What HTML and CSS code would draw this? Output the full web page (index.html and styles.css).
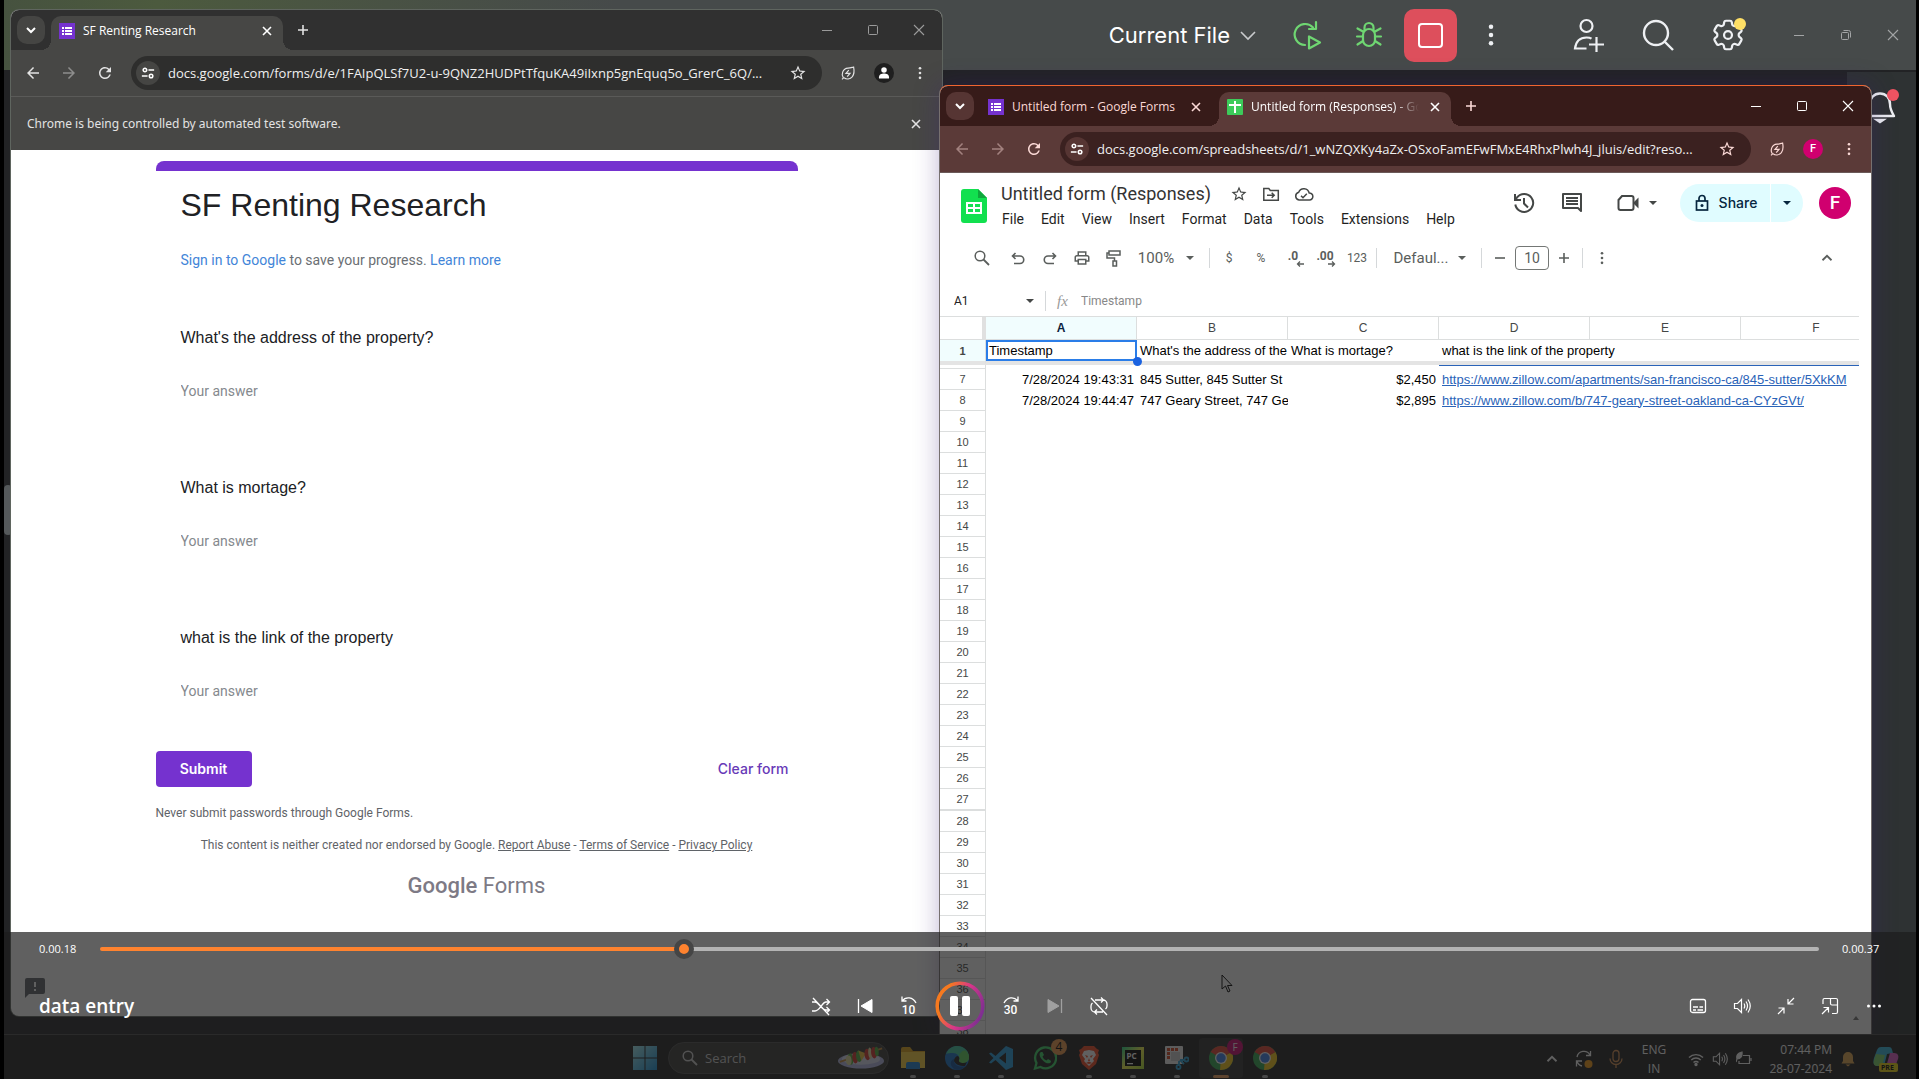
FILE: index.html
```html
<!DOCTYPE html>
<html lang="en">
<head>
<meta charset="utf-8">
<meta name="viewport" content="width=device-width, initial-scale=1">
<title>data entry</title>
<link rel="stylesheet" href="styles.css">
</head>
<body>
<svg class="sprite" aria-hidden="true">
  <symbol id="down" viewBox="0 0 16 16"><path d="M4 6l4 4 4-4" fill="none" stroke="currentColor" stroke-width="2"/></symbol>
  <symbol id="caret" viewBox="0 0 16 16"><path d="M4 6h8l-4 4z" fill="currentColor"/></symbol>
  <symbol id="close" viewBox="0 0 16 16"><path d="M4 4l8 8M12 4l-8 8" fill="none" stroke="currentColor" stroke-width="1.6"/></symbol>
  <symbol id="plus" viewBox="0 0 16 16"><path d="M8 3v10M3 8h10" fill="none" stroke="currentColor" stroke-width="1.6"/></symbol>
  <symbol id="minus" viewBox="0 0 16 16"><path d="M3 8h10" fill="none" stroke="currentColor" stroke-width="1.6"/></symbol>
  <symbol id="wmin" viewBox="0 0 16 16"><path d="M3 8.5h10" stroke="currentColor"/></symbol>
  <symbol id="wmax" viewBox="0 0 16 16"><rect x="3.5" y="3.5" width="9" height="9" rx="1" fill="none" stroke="currentColor"/></symbol>
  <symbol id="wclose" viewBox="0 0 16 16"><path d="M3 3l10 10M13 3L3 13" stroke="currentColor" stroke-width="1.1"/></symbol>
  <symbol id="back" viewBox="0 0 24 24"><path d="M20 11H7.83l5.59-5.59L12 4l-8 8 8 8 1.41-1.41L7.83 13H20v-2z" fill="currentColor"/></symbol>
  <symbol id="fwd" viewBox="0 0 24 24"><path d="M12 4l-1.41 1.41L16.17 11H4v2h12.17l-5.58 5.59L12 20l8-8z" fill="currentColor"/></symbol>
  <symbol id="reload" viewBox="0 0 24 24"><path d="M17.65 6.35A7.958 7.958 0 0 0 12 4c-4.42 0-7.99 3.58-7.99 8s3.57 8 7.99 8c3.73 0 6.84-2.55 7.73-6h-2.08A5.99 5.99 0 0 1 12 18c-3.31 0-6-2.69-6-6s2.69-6 6-6c1.66 0 3.14.69 4.22 1.78L13 11h7V4l-2.35 2.35z" fill="currentColor"/></symbol>
  <symbol id="tune" viewBox="0 0 16 16"><g fill="none" stroke="currentColor" stroke-width="1.8"><circle cx="4.5" cy="4.5" r="2"/><path d="M8.5 4.5H15M1 11.500h6.500"/><circle cx="11.500" cy="11.500" r="2"/></g></symbol>
  <symbol id="star" viewBox="0 0 24 24"><path d="M22 9.24l-7.190-.62L12 2 9.190 8.630 2 9.240l5.460 4.730L5.820 21 12 17.270 18.180 21l-1.630-7.030L22 9.240zM12 15.400l-3.760 2.270 1-4.280-3.320-2.880 4.380-.38L12 6.100l1.710 4.040 4.380.38-3.320 2.880 1 4.280L12 15.400z" fill="currentColor"/></symbol>
  <symbol id="leaf" viewBox="0 0 20 20"><g fill="none" stroke="currentColor" stroke-width="1.500"><path d="M4 15.500C1.500 12 3 4.500 10 4c3 0 4.500-.8 7-1.500 1 5 .8 9-1.500 12-3 3.500-7.500 3.500-10.500 1.500M2.500 18L5 15.500"/><path d="M11 6.500L7.500 10.500h5L9 14.500"/></g></symbol>
  <symbol id="dots" viewBox="0 0 16 16"><g fill="currentColor"><circle cx="8" cy="2.500" r="1.500"/><circle cx="8" cy="8" r="1.500"/><circle cx="8" cy="13.500" r="1.500"/></g></symbol>
  <symbol id="person" viewBox="0 0 24 24"><circle cx="12" cy="12" r="12" fill="#1f1f1f"/><circle cx="12" cy="8.500" r="3.300" fill="#fff"/><path d="M6 18.500v-1.500c0-3 3-4.300 6-4.300s6 1.300 6 4.300v1.500z" fill="#fff"/></symbol>
  <symbol id="formsfav" viewBox="0 0 16 16"><path fill="#7532cf" d="M0 0h16v16H0z"/><path fill="#fff" d="M3 4h2v2H3zM6 4h7v2H6zM3 7h2v2H3zM6 7h7v2H6zM3 10h2v2H3zM6 10h7v2H6z"/></symbol>
  <symbol id="sheetfav" viewBox="0 0 16 16"><rect width="16" height="16" rx="1" fill="#3ccb5a"/><path fill="#fff" d="M2 5h5V2h2v3h5v2H9v7H7V7H2z"/></symbol>
  <symbol id="sheets" viewBox="0 0 26 34"><path fill="#12e04f" d="M3 0h14l9 9v22a3 3 0 0 1-3 3H3a3 3 0 0 1-3-3V3a3 3 0 0 1 3-3z"/><path fill="#0fa83c" d="M17 0l9 9h-9z"/><path fill="#fff" fill-rule="evenodd" d="M5 13h16v12H5zM7 15v3h5v-3zM14 15v3h5v-3zM7 20v3h5v-3zM14 20v3h5v-3z"/></symbol>
  <symbol id="folder" viewBox="0 0 18 18"><path d="M1.800 3.500h5l1.500 2h8v9.700H1.800zM5 10.300h7M9.700 7.800l2.500 2.500-2.500 2.500" fill="none" stroke="currentColor" stroke-width="1.500"/></symbol>
  <symbol id="cloud" viewBox="0 0 20 18"><path d="M5 15a4 4 0 0 1-.3-7.800A5.500 5.500 0 0 1 15.200 8 3.500 3.500 0 0 1 15.500 15zM7 10.700l2 2 3.800-4" fill="none" stroke="currentColor" stroke-width="1.500"/></symbol>
  <symbol id="history" viewBox="0 0 24 24"><g fill="none" stroke="currentColor" stroke-width="2"><path d="M3.300 13.500A9 9 0 1 0 5 6.500M3 3v6h6"/><path d="M3.500 8.500L5.500 6"/><path d="M12 7v5.500l4 4"/></g></symbol>
  <symbol id="comment" viewBox="0 0 24 24"><g fill="none" stroke="currentColor" stroke-width="2"><path d="M21 20V3H3v14h15z" stroke-linejoin="round"/><path d="M6 7h12M6 10h12M6 13h12"/></g></symbol>
  <symbol id="video" viewBox="0 0 24 24"><path d="M6 5h9.500a2 2 0 0 1 2 2v10a2 2 0 0 1-2 2h-11a2 2 0 0 1-2-2V9z" fill="none" stroke="currentColor" stroke-width="2"/><path d="M17 12l5.500-5.500v11z" fill="currentColor"/></symbol>
  <symbol id="lock" viewBox="0 0 18 18"><g fill="none" stroke="currentColor" stroke-width="1.700"><rect x="3.500" y="7" width="11" height="9"/><path d="M6 7V4.500a3 3 0 0 1 6 0V7"/></g><circle cx="9" cy="11.500" r="1.500" fill="currentColor"/></symbol>
  <symbol id="find" viewBox="0 0 18 18"><path d="M10.500 10.500L16 16" stroke="currentColor" stroke-width="1.800"/><circle cx="7" cy="7" r="4.800" fill="none" stroke="currentColor" stroke-width="1.500"/></symbol>
  <symbol id="undo" viewBox="0 0 18 18"><path d="M6.500 4L3.500 7l3 3M3.500 7H11a3.500 3.500 0 0 1 0 7.500H5" fill="none" stroke="currentColor" stroke-width="1.600"/></symbol>
  <symbol id="redo" viewBox="0 0 18 18"><path d="M11.500 4l3 3-3 3M14.500 7H7a3.500 3.500 0 0 0 0 7.500h6" fill="none" stroke="currentColor" stroke-width="1.600"/></symbol>
  <symbol id="print" viewBox="0 0 24 24"><path d="M19 8h-1V3H6v5H5c-1.660 0-3 1.340-3 3v6h4v4h12v-4h4v-6c0-1.660-1.340-3-3-3zM8 5h8v3H8V5zm8 12v2H8v-4h8v2zm2-2v-2H6v2H4v-4c0-.55.45-1 1-1h14c.55 0 1 .45 1 1v4h-2z" fill="currentColor"/></symbol>
  <symbol id="paint" viewBox="0 0 18 18"><path d="M4 2h11v4H4zM4 4H2v5h7.500v3M8 12h3.500v5H8z" fill="none" stroke="currentColor" stroke-width="1.500"/></symbol>
  <symbol id="arrl" viewBox="0 0 8 6"><path d="M8 3H1.500M4 .5L1.500 3 4 5.500" fill="none" stroke="currentColor" stroke-width="1.300"/></symbol>
  <symbol id="arrr" viewBox="0 0 8 6"><path d="M0 3h6.500M4 .5L6.500 3 4 5.500" fill="none" stroke="currentColor" stroke-width="1.300"/></symbol>
  <symbol id="up" viewBox="0 0 16 16"><path d="M4 10l4-4 4 4" fill="none" stroke="currentColor" stroke-width="1.600"/></symbol>
  <symbol id="vol" viewBox="0 0 18 18"><path d="M1.500 6.500v5h3l4 4v-13l-4 4zM11 6.500q1.500 2.500 0 5M13 4.500q3 4.500 0 9M15 2.500q4.500 6.500 0 13" fill="none" stroke="currentColor" stroke-width="1.200"/></symbol>
  <symbol id="chrome" viewBox="0 0 24 24"><circle cx="12" cy="12" r="12" fill="#2fa84f"/><path d="M12 12L1.600 6A12 12 0 0 1 22.400 6z" fill="#e8402f"/><path d="M12 12l10.400-6A12 12 0 0 1 12 24l-1-.1z" fill="#fbc816"/><path d="M12 6h10.400L12 12z" fill="#e8402f"/><circle cx="12" cy="12" r="6" fill="#fff"/><circle cx="12" cy="12" r="4.700" fill="#3b7fee"/></symbol>
</svg>

<div class="desktop">
  <header class="ide-bar">
    <button class="ide-run">Current File <svg class="i20" viewBox="0 0 20 20"><path d="M3 7l7 7 7-7" fill="none" stroke="#c9cbcd" stroke-width="1.600"/></svg></button>
    <button class="ide-btn green" aria-label="Rerun"><svg class="i32" viewBox="0 0 32 32" fill="none" stroke="currentColor" stroke-width="2.200" stroke-linecap="round" stroke-linejoin="round"><path d="M14 26A10.500 10.500 0 1 1 22 8.500M25 3v7h-7"/><path d="M18 17.500v12l11-6z"/></svg></button>
    <button class="ide-btn green" aria-label="Debug"><svg class="i32" viewBox="0 0 32 32" fill="none" stroke="currentColor" stroke-width="2.200" stroke-linecap="round"><rect x="10" y="10" width="12" height="17" rx="6"/><path d="M11.500 11V8.500a4.500 4.500 0 0 1 9 0V11M4 17.500h6M22 17.500h6M4.500 9.500L10 12.500M27.500 9.500L22 12.500M4.500 25.500L10 22M27.500 25.500L22 22"/></svg></button>
    <button class="ide-stop" aria-label="Stop"><span></span></button>
    <button class="ide-btn more" aria-label="More actions"><svg class="i24"><use href="#dots"/></svg></button>
    <button class="ide-btn user" aria-label="Code with me"><svg class="i32" viewBox="0 0 32 32" fill="none" stroke="currentColor" stroke-width="2.200"><circle cx="14.500" cy="7" r="6"/><path d="M14.500 29.500H3c1-8 5-11 11.500-11 2.500 0 4 .5 5 1.200M24.500 18v15M17 25.500h15"/></svg></button>
    <button class="ide-btn" aria-label="Search everywhere"><svg class="i32" viewBox="0 0 32 32" fill="none" stroke="currentColor" stroke-width="2.400"><circle cx="14" cy="14" r="12"/><path d="M22.500 22.500L31 31"/></svg></button>
    <button class="ide-btn" aria-label="Settings"><svg class="i38" viewBox="0 0 24 24" fill="none" stroke="currentColor" stroke-width="1.400"><path d="M9.594 3.94c.09-.542.56-.94 1.11-.94h2.593c.55 0 1.020.398 1.110.94l.213 1.281c.063.374.313.686.645.87.074.04.147.083.22.127.325.196.72.257 1.075.124l1.217-.456a1.125 1.125 0 0 1 1.370.49l1.296 2.247a1.125 1.125 0 0 1-.26 1.431l-1.003.827c-.293.241-.438.613-.43.992a7.723 7.723 0 0 1 0 .255c-.008.378.137.75.43.991l1.004.827c.424.35.534.955.26 1.430l-1.298 2.247a1.125 1.125 0 0 1-1.369.491l-1.217-.456c-.355-.133-.75-.072-1.076.124a6.470 6.470 0 0 1-.22.128c-.331.183-.581.495-.644.869l-.213 1.281c-.09.543-.56.94-1.110.94h-2.594c-.55 0-1.019-.398-1.110-.94l-.213-1.281c-.062-.374-.312-.686-.644-.87a6.520 6.520 0 0 1-.22-.127c-.325-.196-.72-.257-1.076-.124l-1.217.456a1.125 1.125 0 0 1-1.369-.49l-1.297-2.247a1.125 1.125 0 0 1 .26-1.431l1.004-.827c.292-.24.437-.613.43-.991a6.932 6.932 0 0 1 0-.255c.007-.38-.138-.751-.43-.992l-1.004-.827a1.125 1.125 0 0 1-.26-1.430l1.297-2.247a1.125 1.125 0 0 1 1.370-.491l1.216.456c.356.133.751.072 1.076-.124.072-.044.146-.086.22-.128.332-.183.582-.495.644-.869l.214-1.280Z"/><circle cx="12" cy="12" r="2.500"/></svg><i class="badge yellow"></i></button>
    <div class="ide-win">
      <button aria-label="Minimize"><svg class="i16"><use href="#wmin"/></svg></button>
      <button aria-label="Restore"><svg class="i16" viewBox="0 0 16 16" fill="none" stroke="currentColor"><rect x="3.500" y="5.500" width="7" height="7" rx="1"/><path d="M5.500 3.500h5a2 2 0 0 1 2 2v5"/></svg></button>
      <button aria-label="Close"><svg class="i16"><use href="#wclose"/></svg></button>
    </div>
  </header>
  <aside class="ide-side">
    <button aria-label="Notifications"><svg class="i36" viewBox="0 0 36 36" fill="none" stroke="currentColor" stroke-width="2.400"><path d="M4 28h28c-3-5-4-7-4-12 0-6-4-10.500-10-10.500S8 10 8 16c0 5-1 7-4 12z" stroke-linejoin="round"/><path d="M15 32h6l-3 2z" fill="currentColor"/></svg><i class="badge red"></i></button>
  </aside>
  <div class="ide-handle"></div>

  <section class="window form-window">
    <div class="strip">
      <button class="tab-search" aria-label="Search tabs"><svg class="i16"><use href="#down"/></svg></button>
      <div class="tab active"><svg class="i16"><use href="#formsfav"/></svg><span>SF Renting Research</span><button aria-label="Close tab"><svg class="i16"><use href="#close"/></svg></button></div>
      <button class="new-tab" aria-label="New tab"><svg class="i16"><use href="#plus"/></svg></button>
      <div class="controls"><button aria-label="Minimize"><svg class="i16"><use href="#wmin"/></svg></button><button aria-label="Maximize"><svg class="i16"><use href="#wmax"/></svg></button><button aria-label="Close"><svg class="i16"><use href="#wclose"/></svg></button></div>
    </div>
    <div class="bar">
      <button aria-label="Back"><svg class="i18"><use href="#back"/></svg></button>
      <button class="off" aria-label="Forward"><svg class="i18"><use href="#fwd"/></svg></button>
      <button aria-label="Reload"><svg class="i18"><use href="#reload"/></svg></button>
      <div class="omnibox"><span class="site"><svg class="i14"><use href="#tune"/></svg></span><input type="text" aria-label="Address" value="docs.google.com/forms/d/e/1FAIpQLSf7U2-u-9QNZ2HUDPtTfquKA49iIxnp5gnEquq5o_GrerC_6Q/..."><button aria-label="Bookmark"><svg class="i18"><use href="#star"/></svg></button></div>
      <button aria-label="Energy saver"><svg class="i16"><use href="#leaf"/></svg></button>
      <button aria-label="Profile"><svg class="i20"><use href="#person"/></svg></button>
      <button aria-label="Menu"><svg class="i14"><use href="#dots"/></svg></button>
    </div>
    <div class="infobar"><span>Chrome is being controlled by automated test software.</span><button aria-label="Dismiss"><svg class="i16"><use href="#close"/></svg></button></div>
    <form class="form">
      <div class="form-top"></div>
      <div class="form-body">
        <h1>SF Renting Research</h1>
        <p class="signin"><a href="#">Sign in to Google</a> to save your progress. <a href="#">Learn more</a></p>
        <div class="questions">
          <div class="q"><label for="q1">What's the address of the property?</label><input id="q1" type="text" placeholder="Your answer"></div>
          <div class="q"><label for="q2">What is mortage?</label><input id="q2" type="text" placeholder="Your answer"></div>
          <div class="q"><label for="q3">what is the link of the property</label><input id="q3" type="text" placeholder="Your answer"></div>
        </div>
      </div>
      <div class="actions"><button class="submit" type="button">Submit</button><button class="clear" type="button">Clear form</button></div>
      <p class="never">Never submit passwords through Google Forms.</p>
      <p class="legal">This content is neither created nor endorsed by Google. <a href="#">Report Abuse</a> - <a href="#">Terms of Service</a> - <a href="#">Privacy Policy</a></p>
      <p class="brand"><b>Google</b> Forms</p>
    </form>
    <button class="report" aria-label="Report a problem"><svg class="i24" viewBox="0 0 24 24"><path d="M4 2h16a2 2 0 0 1 2 2v12a2 2 0 0 1-2 2H6l-4 4V4a2 2 0 0 1 2-2z" fill="#5f6368"/><path d="M11 6h2v5h-2zM11 13h2v2h-2z" fill="#fff"/></svg></button>
  </section>

  <section class="window sheet-window">
    <div class="strip">
      <button class="tab-search" aria-label="Search tabs"><svg class="i16"><use href="#down"/></svg></button>
      <div class="tab"><svg class="i16"><use href="#formsfav"/></svg><span>Untitled form - Google Forms</span><button aria-label="Close tab"><svg class="i16"><use href="#close"/></svg></button></div>
      <div class="tab active"><svg class="i16"><use href="#sheetfav"/></svg><span class="fade">Untitled form (Responses) - Goo</span><button aria-label="Close tab"><svg class="i16"><use href="#close"/></svg></button></div>
      <button class="new-tab" aria-label="New tab"><svg class="i16"><use href="#plus"/></svg></button>
      <div class="controls"><button aria-label="Minimize"><svg class="i16"><use href="#wmin"/></svg></button><button aria-label="Maximize"><svg class="i16"><use href="#wmax"/></svg></button><button aria-label="Close"><svg class="i16"><use href="#wclose"/></svg></button></div>
    </div>
    <div class="bar">
      <button class="off" aria-label="Back"><svg class="i18"><use href="#back"/></svg></button>
      <button class="off" aria-label="Forward"><svg class="i18"><use href="#fwd"/></svg></button>
      <button aria-label="Reload"><svg class="i18"><use href="#reload"/></svg></button>
      <div class="omnibox"><span class="site"><svg class="i14"><use href="#tune"/></svg></span><input type="text" aria-label="Address" value="docs.google.com/spreadsheets/d/1_wNZQXKy4aZx-OSxoFamEFwFMxE4RhxPlwh4J_jluis/edit?reso..."><button aria-label="Bookmark"><svg class="i18"><use href="#star"/></svg></button></div>
      <button aria-label="Energy saver"><svg class="i16"><use href="#leaf"/></svg></button>
      <button aria-label="Profile"><span class="avatar small">F</span></button>
      <button aria-label="Menu"><svg class="i14"><use href="#dots"/></svg></button>
    </div>
    <div class="sheet">
      <header class="doc-head">
        <svg class="logo"><use href="#sheets"/></svg>
        <div class="doc-name">
          <div class="doc-title"><span>Untitled form (Responses)</span><svg class="i18"><use href="#star"/></svg><svg class="i18"><use href="#folder"/></svg><svg class="i20"><use href="#cloud"/></svg></div>
          <nav class="menu"><button>File</button><button>Edit</button><button>View</button><button>Insert</button><button>Format</button><button>Data</button><button>Tools</button><button>Extensions</button><button>Help</button></nav>
        </div>
        <div class="doc-right">
          <button aria-label="Version history"><svg class="i24"><use href="#history"/></svg></button>
          <button aria-label="Comments"><svg class="i24"><use href="#comment"/></svg></button>
          <button class="meet" aria-label="Meet"><svg class="i24"><use href="#video"/></svg><svg class="i16"><use href="#caret"/></svg></button>
          <div class="share"><button><svg class="i18"><use href="#lock"/></svg>Share</button><button aria-label="Share options"><svg class="i16"><use href="#caret"/></svg></button></div>
          <span class="avatar">F</span>
        </div>
      </header>
      <div class="tools">
        <button class="menus" aria-label="Search menus"><svg class="i18"><use href="#find"/></svg></button>
        <button aria-label="Undo"><svg class="i18"><use href="#undo"/></svg></button>
        <button aria-label="Redo"><svg class="i18"><use href="#redo"/></svg></button>
        <button aria-label="Print"><svg class="i18"><use href="#print"/></svg></button>
        <button aria-label="Paint format"><svg class="i18"><use href="#paint"/></svg></button>
        <button class="drop">100% <svg class="i16"><use href="#caret"/></svg></button>
        <i class="rule"></i>
        <button class="sm">$</button><button class="sm">%</button>
        <button class="dec" aria-label="Decrease decimals">.0<svg><use href="#arrl"/></svg></button>
        <button class="dec" aria-label="Increase decimals">.00<svg><use href="#arrr"/></svg></button>
        <button class="sm">123</button>
        <i class="rule"></i>
        <button class="drop font">Defaul... <svg class="i16"><use href="#caret"/></svg></button>
        <i class="rule"></i>
        <button class="tight" aria-label="Smaller"><svg class="i16"><use href="#minus"/></svg></button>
        <input class="size" type="text" aria-label="Font size" value="10">
        <button class="tight" aria-label="Larger"><svg class="i16"><use href="#plus"/></svg></button>
        <i class="rule"></i>
        <button aria-label="More"><svg class="i14"><use href="#dots"/></svg></button>
        <button class="hide" aria-label="Hide menus"><svg class="i18"><use href="#up"/></svg></button>
      </div>
      <div class="formula">
        <input class="cellname" type="text" aria-label="Name box" value="A1"><svg class="i16"><use href="#caret"/></svg><i class="rule"></i><i class="fx">fx</i><input class="cellval" type="text" aria-label="Formula" value="Timestamp">
      </div>
      <div class="grid">
        <table>
          <colgroup><col class="n"><col><col><col><col><col><col></colgroup>
          <thead><tr><th class="corner"></th><th class="sel">A</th><th>B</th><th>C</th><th>D</th><th>E</th><th>F</th></tr></thead>
          <tbody>
            <tr class="frozen"><th>1</th><td class="cur">Timestamp<i></i></td><td>What's the address of the</td><td>What is mortage?</td><td colspan="3">what is the link of the property</td></tr>
            <tr class="part"><th></th><td></td><td></td><td></td><td class="ul" colspan="3"></td></tr>
            <tr><th>7</th><td class="r">7/28/2024 19:43:31</td><td>845 Sutter, 845 Sutter St</td><td class="r">$2,450</td><td colspan="3"><a href="#">https://www.zillow.com/apartments/san-francisco-ca/845-sutter/5XkKM</a></td></tr>
            <tr><th>8</th><td class="r">7/28/2024 19:44:47</td><td>747 Geary Street, 747 Ge</td><td class="r">$2,895</td><td colspan="3"><a href="#">https://www.zillow.com/b/747-geary-street-oakland-ca-CYzGVt/</a></td></tr>
            <tr><th>9</th></tr><tr><th>10</th></tr><tr><th>11</th></tr><tr><th>12</th></tr><tr><th>13</th></tr><tr><th>14</th></tr><tr><th>15</th></tr><tr><th>16</th></tr><tr><th>17</th></tr><tr><th>18</th></tr><tr><th>19</th></tr><tr><th>20</th></tr><tr><th>21</th></tr><tr><th>22</th></tr><tr><th>23</th></tr><tr><th>24</th></tr><tr><th>25</th></tr><tr><th>26</th></tr><tr class="thick"><th>27</th></tr><tr><th>28</th></tr><tr><th>29</th></tr><tr><th>30</th></tr><tr><th>31</th></tr><tr><th>32</th></tr><tr><th>33</th></tr><tr><th>34</th></tr><tr><th>35</th></tr><tr><th>36</th></tr><tr><th>37</th></tr><tr><th>38</th></tr>
          </tbody>
        </table>
        <svg class="scroll-up" viewBox="0 0 6 4"><path d="M0 4l3-4 3 4z" fill="#777"/></svg>
      </div>
    </div>
  </section>

  <footer class="taskbar">
    <div class="apps">
      <button class="app start" aria-label="Start"><svg class="i24" viewBox="0 0 24 24"><defs><linearGradient id="wg" x1="0" y1="0" x2="1" y2="1"><stop offset="0" stop-color="#a5f0f5"/><stop offset="1" stop-color="#1590d8"/></linearGradient></defs><path fill="url(#wg)" d="M0 0h11.500v11.500H0zM12.500 0H24v11.500H12.500zM0 12.500h11.500V24H0zM12.500 12.500H24V24H12.500z"/></svg></button>
      <div class="search"><svg class="i18"><use href="#find"/></svg><input type="text" aria-label="Search" placeholder="Search"><svg class="food" viewBox="0 0 50 24"><ellipse cx="25" cy="15" rx="24" ry="8" fill="#b4b9e6"/><ellipse cx="25" cy="13" rx="20" ry="6" fill="#dcdff5"/><path d="M3 16L47 2" stroke="#c68a3a" stroke-width="2"/><g transform="rotate(-6 25 12)"><ellipse cx="14" cy="12" rx="3" ry="6" fill="#4fae3a"/><ellipse cx="12" cy="13" rx="3" ry="5" fill="#e8e2a0"/><ellipse cx="19" cy="11" rx="3" ry="6" fill="#d8322a"/><ellipse cx="23" cy="10" rx="3" ry="6" fill="#4fae3a"/><path d="M23 4l8 4-6 7z" fill="#f0c23a"/><ellipse cx="32" cy="9" rx="3" ry="6" fill="#d8322a"/><ellipse cx="35" cy="8" rx="2" ry="6" fill="#e8e2a0"/><ellipse cx="39" cy="8" rx="3" ry="6" fill="#d8322a"/><ellipse cx="42" cy="7" rx="2" ry="5" fill="#4fae3a"/></g></svg></div>
      <button class="app run" aria-label="File Explorer"><svg class="i24" viewBox="0 0 24 24"><path d="M0 3a2 2 0 0 1 2-2h7l3 4h12v17H0z" fill="#e0a517"/><path d="M0 6h24v16H0z" fill="#ffd23f"/><path d="M5 23v-5a2 2 0 0 1 2-2h10a2 2 0 0 1 2 2v5z" fill="#1d80d3"/></svg></button>
      <button class="app run" aria-label="Edge"><svg class="i24" viewBox="0 0 24 24"><circle cx="12" cy="12" r="12" fill="#1673c8"/><path d="M1 8C4 1 9 0 12 0c8 0 12 6 12 11 0 4-3 6-6 6s-5-1-4-3c1-4-2-7-6-7-3 0-5 0-7 1z" fill="#3fc9a0"/><path d="M24 11c0 4-3 6-6 6s-5-1-4-3c1-1 1-2 0-4 1-3 5-8 8-4 1 1 2 3 2 5z" fill="#5fd65a"/><path d="M9 13c-1 6 5 9 11 7-2 3-5 4-8 4-6-1-9-9-3-11z" fill="#0c4f9c"/><path d="M14 14c1-2 0-4-2-4-2 1-3 3-3 5 1 3 5 5 11 5l2-4c-3 2-9 1-8-2z" fill="#212121"/></svg></button>
      <button class="app run" aria-label="Visual Studio Code"><svg class="i24" viewBox="0 0 24 24"><path d="M17 0l7 3v18l-7 3L6.500 14 2 17.500 0 16.500 4.500 12 0 7.500l2-1L6.500 10zM17 6.500L10 12l7 5.500z" fill="#249fe0" fill-rule="evenodd"/></svg></button>
      <button class="app" aria-label="WhatsApp"><svg class="i24" viewBox="0 0 24 24"><path d="M2 22.500l1.500-5.500A10.500 10.500 0 1 1 7.500 21z" fill="none" stroke="#3ad566" stroke-width="2.300"/><path d="M8 6c-2 1-2 4 1 7.500S15 18 17 17c1.500-1 1-2 .5-2.500L15 13l-1.500 1.500c-2-.8-3.300-2-4-4L11 9 9.500 6z" fill="#3ad566"/></svg><b class="count">4</b></button>
      <button class="app run" aria-label="Brave"><svg class="i24" viewBox="0 0 24 24"><path d="M7 0h10l3 3 2 1-1 3 1 2-3 9-7 6-7-6L2 9l1-2-1-3 2-1z" fill="#f4461f"/><path d="M7 5l5-1 5 1 2 4-3 4 1 2-5 5-5-5 1-2-3-4z" fill="#fff"/><path d="M8 9l3 1-1 2zM16 9l-3 1 1 2zM12 12l1 3h-2zM9 17l3-1.500 3 1.500-3 1z" fill="#f4461f"/></svg></button>
      <button class="app run" aria-label="PyCharm"><svg class="i24" viewBox="0 0 24 24"><defs><linearGradient id="pg" x1="0" y1="0" x2="1" y2="1"><stop offset="0" stop-color="#21d789"/><stop offset=".5" stop-color="#fcf84a"/><stop offset="1" stop-color="#a8e030"/></linearGradient></defs><path fill="url(#pg)" d="M1 1h22v22H1z"/><path d="M4 4h16v16H4z"/><path d="M6 17h6v1.300H6z" fill="#fff"/><text x="5.500" y="13" font-size="8" font-weight="700" fill="#fff" font-family="Noto Sans, sans-serif">PC</text></svg></button>
      <button class="app run" aria-label="Snipping Tool"><svg class="i24" viewBox="0 0 24 24"><rect width="18" height="18" rx="1" fill="#f2f2f2"/><path d="M2 2h3v3H2zM6 2h3v3H6zM10 2h3v3h-3zM2 6h3v3H2zM2 10h3v3H2z" fill="#d8431f"/><path d="M6 6h9v9H6z" fill="#d0d0d0"/><g fill="none" stroke="#27a3dc" stroke-width="1.800"><circle cx="13.500" cy="21" r="2"/><circle cx="21.500" cy="13.500" r="2"/><path d="M14 19v-4M20 14h-5M15 14l4 4"/></g></svg></button>
      <button class="app run focus" aria-label="Chrome, F"><svg class="i24"><use href="#chrome"/></svg><b class="count pink">F</b></button>
      <button class="app run" aria-label="Chrome"><svg class="i24"><use href="#chrome"/></svg></button>
    </div>
    <div class="tray">
      <button aria-label="Hidden icons"><svg class="i18"><use href="#up"/></svg></button>
      <button aria-label="Update"><svg class="i20" viewBox="0 0 20 20" fill="none" stroke="currentColor" stroke-width="1.300"><path d="M3 8a7 7 0 0 1 13-2M16.500 2v4.500H12M8 17a7 7 0 0 1-5-5M2.500 17.500v-5.500H8"/><circle cx="14.500" cy="15" r="4" fill="#f89a12" stroke="none"/></svg></button>
      <button class="mic" aria-label="Microphone"><svg class="i20" viewBox="0 0 20 20" fill="none" stroke="#d98f4f" stroke-width="1.300"><rect x="7" y="1.500" width="6" height="11" rx="3"/><path d="M4 9.500a6 6 0 0 0 12 0M10 15.500V19"/></svg></button>
      <span class="lang">ENG<br>IN</span>
      <svg class="i16" viewBox="0 0 16 16" fill="none" stroke="currentColor" stroke-width="1.400"><path d="M1 6.500a10 10 0 0 1 14 0M3.300 9a6.700 6.700 0 0 1 9.400 0M5.500 11.500a3.500 3.500 0 0 1 5 0"/><circle cx="8" cy="13.500" r="1" fill="currentColor"/></svg>
      <svg class="i16"><use href="#vol"/></svg>
      <svg class="i16" viewBox="0 0 16 16" fill="none" stroke="currentColor" stroke-width="1.200"><path d="M7 4.500h6.500v8H3V10M15 7v3"/><path d="M1 8c-1-4 1-6 5-7 .5 4-1 7-5 7l-1 3" fill="currentColor"/></svg>
      <time class="clock">07:44 PM<br>28-07-2024</time>
      <svg class="i16" viewBox="0 0 16 16" fill="#e5a84e"><path d="M1.500 12.500L3 10V6a5 5 0 0 1 10 0v4l1.500 2.500zM5.500 13.500h5l-2.500 2z"/></svg>
      <svg class="pre" viewBox="0 0 26 28"><path d="M8 2h8c3 0 3 3 4 6l-6 1-3 12H5c-5 0-5-4-4-8L4 5c1-2 2-3 4-3z" fill="#33b7e0"/><path d="M3 9l-2 6c-1 4 0 6 4 6h4l3-11z" fill="#7ed56a"/><path d="M17 8h4c4 0 5 3 4 6l-3 8h-9z" fill="#e05ac8"/><rect x="6" y="18" width="19" height="9" rx="2" fill="#f5d90a"/><text x="8" y="25" font-size="7" font-weight="700" font-family="Noto Sans, sans-serif">PRE</text></svg>
    </div>
  </footer>

  <svg class="pointer" viewBox="0 0 12 19"><path d="M1 1v14l3.500-3 2.500 6 2-1-2.500-5.500H11z" fill="#fff" stroke="#000"/></svg>

  <section class="player">
    <div class="seek"><span>0.00.18</span><input type="range" min="0" max="1000" value="338" aria-label="Position"><span>0.00.37</span></div>
    <div class="transport">
      <h2>data entry</h2>
      <div class="keys">
        <button aria-label="Shuffle off"><svg class="i20" viewBox="0 0 20 20" fill="none" stroke="currentColor" stroke-width="1.300"><path d="M1 15h3C9 15 11 6 15 6h3M15.500 3L18.500 6l-3 3M15.500 11l3 3-3 3M1 6h3c4 0 6 8 11 8h3M2 2l16 17"/></svg></button>
        <button aria-label="Previous"><svg class="i16" viewBox="0 0 16 16"><path d="M1.500 1v14" stroke="currentColor" stroke-width="1.300"/><path d="M15 1.500v13L4 8z" fill="currentColor" stroke="currentColor" stroke-linejoin="round"/></svg></button>
        <button class="skip" aria-label="Back 10 seconds"><svg viewBox="0 0 18 8" fill="none" stroke="currentColor" stroke-width="1.300"><path d="M2 .5V5h4.500M2 5c4-5 11-4 14 2"/></svg>10</button>
        <button class="pause" aria-label="Pause"><svg viewBox="0 0 50 50"><defs><linearGradient id="ring" x1="0" y1=".3" x2="1" y2=".7"><stop offset=".15" stop-color="#f5791f"/><stop offset=".55" stop-color="#d8358a"/><stop offset="1" stop-color="#7a2f92"/></linearGradient></defs><circle cx="25" cy="25" r="22.800" fill="none" stroke="url(#ring)" stroke-width="3.600"/><rect x="15" y="15" width="8" height="20" rx="2" fill="#fff"/><rect x="27" y="15" width="8" height="20" rx="2" fill="#fff"/></svg></button>
        <button class="skip" aria-label="Forward 30 seconds"><svg viewBox="0 0 18 8" fill="none" stroke="currentColor" stroke-width="1.300"><path d="M16 .5V5h-4.500M16 5C12 0 5 1 2 7"/></svg>30</button>
        <button class="dim" aria-label="Next"><svg class="i16" viewBox="0 0 16 16"><path d="M14.500 1v14" stroke="currentColor" stroke-width="1.300"/><path d="M1 1.500v13L12 8z" fill="currentColor" stroke="currentColor" stroke-linejoin="round"/></svg></button>
        <button aria-label="Repeat off"><svg class="i20" viewBox="0 0 20 20" fill="none" stroke="currentColor" stroke-width="1.300"><path d="M6 4h8a4 4 0 0 1 4 4v2a4 4 0 0 1-1.500 3M12 1.500L14.500 4 12 6.500M14 16H6a4 4 0 0 1-4-4v-2a4 4 0 0 1 1.500-3M8 13.500L5.500 16 8 18.500M2 2l16 17"/></svg></button>
      </div>
      <div class="extras">
        <button aria-label="Subtitles"><svg class="i18" viewBox="0 0 18 18" fill="none" stroke="currentColor" stroke-width="1.300"><rect x="1.500" y="2.500" width="15" height="13" rx="2"/><path d="M4 10h5M10.500 10H14M4 13h3M8.500 13H14"/></svg></button>
        <button aria-label="Volume"><svg class="i18"><use href="#vol"/></svg></button>
        <button aria-label="Exit full screen"><svg class="i18" viewBox="0 0 18 18" fill="none" stroke="currentColor" stroke-width="1.200"><path d="M17 1l-6 6M11 2v5h5.500M1 17l6-6M1.500 11H7v5.500"/></svg></button>
        <button aria-label="Mini player"><svg class="i18" viewBox="0 0 18 18" fill="none" stroke="currentColor" stroke-width="1.200"><path d="M2 7V3a1.500 1.500 0 0 1 1.500-1.500H15A1.500 1.500 0 0 1 16.500 3v12a1.500 1.500 0 0 1-1.500 1.500h-4M9.500 1.500v5a1.500 1.500 0 0 0 1.500 1.500h5.500M1 17l6-6M2.500 10.500h5v5"/></svg></button>
        <button aria-label="More"><svg class="i16" viewBox="0 0 16 16" fill="currentColor"><circle cx="2.500" cy="8" r="1.500"/><circle cx="8" cy="8" r="1.500"/><circle cx="13.500" cy="8" r="1.500"/></svg></button>
      </div>
    </div>
  </section>
</div>
</body>
</html>
```
FILE: styles.css
```css
* { box-sizing: border-box; }
html, body { height: 100%; }
body { margin: 0; background: #000; font: 12px/16px "Open Sans", "Noto Sans", sans-serif; }
h1, h2, p { margin: 0; font-weight: 400; }
button { border: 0; padding: 0; background: none; color: inherit; font: inherit; display: flex; align-items: center; justify-content: center; flex: none; }
input { border: 0; padding: 0; background: none; color: inherit; font: inherit; min-width: 0; outline: 0; }
svg { flex: none; display: block; }
.sprite { position: absolute; width: 0; height: 0; }
.i14 { width: 14px; height: 14px; }
.i16 { width: 16px; height: 16px; }
.i18 { width: 18px; height: 18px; }
.i20 { width: 20px; height: 20px; }
.i24 { width: 24px; height: 24px; }
.i32 { width: 32px; height: 32px; overflow: visible; }
.i36 { width: 36px; height: 36px; }
.i38 { width: 38px; height: 38px; }

.desktop { position: relative; height: 100%; min-height: 600px; overflow: hidden; background: #222325; border-left: 4px solid #000; border-right: 3px solid #000; }

/* IDE behind the browser windows */
.ide-bar { height: 70px; display: flex; align-items: center; justify-content: flex-end; color: #eef0f3; background: linear-gradient(90deg, #46523f 0, #4c5a3e 8%, #464a4a 32%); }
.ide-run { font: 22px/28px Inter, sans-serif; gap: 8px; color: #fff; margin-right: 18px; }
.ide-btn { position: relative; width: 62px; height: 54px; }
.ide-btn:nth-child(3) { margin-right: 4px; }
.green { color: #6fd672; }
.ide-stop { width: 53px; height: 53px; border-radius: 10px; background: #dd4f5c; }
.ide-stop span { width: 25px; height: 25px; border: 2px solid #fff; border-radius: 4px; }
.ide-btn.more { width: 68px; }
.ide-btn.user { margin-left: 28px; }
.ide-btn.user, .ide-btn.user ~ .ide-btn { width: 70px; }
.badge { position: absolute; width: 12px; height: 12px; border-radius: 50%; }
.badge.yellow { background: #ffe066; left: 41px; top: 10px; }
.ide-win { display: flex; color: #a3a5a6; margin-left: 12px; }
.ide-win button { width: 47px; height: 47px; }
.ide-side { position: absolute; top: 72px; right: 0; bottom: 44px; width: 69px; background: #2e3233; color: #eef0f3; }
.ide-side button { position: absolute; top: 16px; left: 15px; }
.badge.red { background: #f05462; left: 25px; top: 1px; }
.ide-handle { position: absolute; left: 0; top: 485px; width: 8px; height: 50px; background: #55595b; border-radius: 4px; }

/* Browser windows */
.window { position: absolute; display: flex; flex-direction: column; overflow: hidden; background: #fff; border-radius: 8px; }
.form-window { left: 7px; top: 10px; bottom: 63px; right: calc(50% + 18px); --strip: #303030; --tool: #474745; --field: #2e2e2d; --fg: #e3e3e3; --chip: #454543; box-shadow: 0 0 0 1px #5f655f; }
.sheet-window { left: calc(50% - 20px); right: 45px; top: 86px; bottom: 45px; border-radius: 8px 8px 0 0; --strip: #371b19; --tool: #5b3a38; --field: #3b2120; --fg: #fbd9d6; --chip: #563533; box-shadow: 0 -1px 0 #f0652f, 0 0 0 1px #77706f, 0 0 26px rgba(60, 30, 120, .35); }
.strip { height: 40px; flex: none; display: flex; padding-left: 6px; background: var(--strip); color: var(--fg); }
.tab-search { width: 28px; height: 28px; margin: 6px 6px 0 0; border-radius: 10px; background: var(--chip); color: #fff; }
.tab { position: relative; width: 232px; height: 34px; margin-top: 6px; padding: 0 8px 4px; display: flex; align-items: center; gap: 8px; border-radius: 10px 10px 0 0; }
.tab + .tab { margin-left: 7px; }
.tab.active { background: var(--tool); color: #fff; }
.tab.active::before, .tab.active::after { content: ""; position: absolute; bottom: 0; width: 10px; height: 10px; }
.tab.active::before { left: -10px; background: radial-gradient(circle at 0 0, transparent 10px, var(--tool) 10px); }
.tab.active::after { right: -10px; background: radial-gradient(circle at 100% 0, transparent 10px, var(--tool) 10px); }
.tab span { flex: 1; min-width: 0; overflow: hidden; white-space: nowrap; font-size: 12px; line-height: 20px; }
.tab .fade { -webkit-mask-image: linear-gradient(90deg, #000 85%, transparent); mask-image: linear-gradient(90deg, #000 85%, transparent); }
.new-tab { width: 28px; height: 28px; margin: 6px 0 0 6px; }
.controls { display: flex; margin-left: auto; color: #fff; }
.form-window .controls { color: #9a9a9a; }
.controls button { width: 46px; height: 40px; }
.bar { height: 46px; flex: none; display: flex; align-items: center; gap: 8px; padding: 0 8px; background: var(--tool); color: var(--fg); }
.bar button { width: 28px; height: 28px; }
.bar .off { opacity: .45; }
.omnibox { flex: 1; min-width: 0; height: 34px; margin: 0 4px; padding: 0 10px 0 5px; border-radius: 17px; display: flex; align-items: center; background: var(--field); }
.omnibox input { flex: 1; margin-left: 8px; font-size: 13px; line-height: 20px; color: #f0f0f0; }
.site { width: 24px; height: 24px; border-radius: 50%; background: var(--chip); display: grid; place-items: center; color: #fff; }
.infobar { height: 54px; flex: none; display: flex; align-items: center; justify-content: space-between; padding: 0 16px; background: var(--tool); border-top: 1px solid #5a5a58; color: var(--fg); font-family: "Noto Sans", sans-serif; }
.infobar button { width: 20px; height: 20px; }
.avatar { width: 32px; height: 32px; border-radius: 50%; background: #d0006f; color: #fff; display: grid; place-items: center; font: 500 19px/32px Roboto, sans-serif; }
.avatar.small { width: 20px; height: 20px; font-size: 11px; line-height: 20px; }

/* Form page */
.form { flex: 1; width: 100%; max-width: 642px; margin: 0 auto; padding-top: 11px; color: #202124; font-family: Roboto, sans-serif; }
.form-top { height: 10px; border-radius: 8px 8px 0 0; background: #7532cf; }
.form-body { padding: 14px 25px 0; }
.form h1 { font: 32px/40px "Liberation Sans", sans-serif; }
.signin { margin: 25px 0 56px; font-size: 14px; line-height: 20px; color: #6b6f74; }
.signin a { color: #4285d8; text-decoration: none; }
.questions { display: grid; gap: 73px; }
.q { display: grid; gap: 29px; }
.q label { font: 16px/24px "Liberation Sans", sans-serif; }
.q input { height: 24px; font-size: 14px; }
.q input::placeholder { color: #85898e; opacity: 1; }
.actions { display: flex; justify-content: space-between; margin-top: 48px; font: 500 14px/20px Inter, sans-serif; }
.submit { width: 96px; height: 36px; border-radius: 4px; background: #7532cf; color: #fff; font-weight: 600; }
.clear { color: #673ab7; padding: 0 9px; }
.never { margin: 18px 0 16px; color: #5f6368; }
.legal { text-align: center; color: #5f6368; }
.legal a { color: inherit; }
.brand { margin-top: 17px; text-align: center; font-size: 22px; line-height: 32px; color: #7d7a85; }
.brand b { font-weight: 500; }
.report { position: absolute; left: 12px; bottom: 16px; }

/* Spreadsheet page */
.sheet { flex: 1; min-height: 0; display: flex; flex-direction: column; border-top: 1px solid #6b5a59; color: #444746; font-family: Roboto, sans-serif; }
.doc-head { display: flex; padding: 9px 20px 0 21px; }
.logo { width: 26px; height: 34px; margin-top: 7px; }
.doc-name { margin-left: 7px; }
.doc-title { display: flex; align-items: center; gap: 14px; height: 24px; padding-left: 7px; }
.doc-title span { font-size: 18px; line-height: 24px; margin-right: 5px; color: #333; }
.menu { display: flex; gap: 1px; margin-top: 3px; font-size: 14px; line-height: 20px; color: #1f1f1f; }
.menu button { padding: 0 8px; }
.doc-right { margin-left: auto; display: flex; align-items: center; height: 42px; }
.doc-right > button { width: 48px; height: 32px; }
.doc-right .meet { width: 68px; gap: 5px; margin: 0 8px; }
.share { display: flex; height: 38px; border-radius: 19px; overflow: hidden; background: #e0fcff; color: #06263f; font: 500 14px/20px Inter, sans-serif; }
.share button { width: 90px; gap: 8px; }
.share button + button { width: 33px; border-left: 1px solid #fff; }
.doc-right .avatar { margin-left: 16px; }
.tools { display: flex; align-items: center; height: 32px; margin-top: 13px; padding: 0 28px 0 26px; font-size: 14px; color: #5a5e5c; }
.tools button { width: 32px; height: 28px; }
.tools .menus { margin-right: 4px; }
.tools .drop { width: 76px; gap: 8px; font-size: 15px; }
.tools .font { width: 92px; margin-left: 6px; gap: 6px; }
.tools .sm { font-size: 12px; }
.tools .dec { position: relative; font-weight: 700; font-size: 12px; align-items: flex-start; padding-top: 4px; }
.dec svg { position: absolute; width: 8px; height: 6px; right: 5px; bottom: 5px; }
.tools .tight { width: 30px; }
.rule { width: 1px; height: 20px; background: #d5d8da; margin: 0 3px; flex: none; }
.size { width: 34px; height: 24px; border: 1px solid #747775; border-radius: 4px; text-align: center; }
.tools .hide { margin-left: auto; }
.formula { display: flex; align-items: center; height: 30px; margin-top: 12px; padding-left: 14px; font-size: 12px; flex: none; }
.cellname { width: 68px; color: #222; }
.formula .rule { margin: 0 11px 0 7px; }
.formula .fx { width: 16px; margin-right: 8px; font: italic 15px/16px "Liberation Serif", serif; color: #999; }
.cellval { flex: 1; color: #888; }
.grid { position: relative; flex: 1; min-height: 0; overflow: hidden; margin-right: 12px; border-top: 1px solid #dcdede; color: #000; font-family: "Liberation Sans", sans-serif; font-size: 13px; }
.grid table { width: 952px; table-layout: fixed; border-collapse: separate; border-spacing: 0; }
.grid col { width: 151px; }
.grid .n { width: 46px; }
.grid th, .grid td { height: 21px; padding: 0 3px; line-height: 20px; overflow: hidden; white-space: nowrap; text-align: left; }
.grid tbody th, .grid thead th { font-size: 11px; font-weight: 400; text-align: center; color: #444746; border-right: 1px solid #dcdede; border-bottom: 1px solid #dcdede; }
.grid thead th { height: 23px; font-size: 12px; }
.grid thead .corner { border-right: 4px solid #e0e0e0; }
.grid thead .sel { background: #f1fdfe; font-weight: 700; color: #0b2340; }
.grid .frozen th { font-weight: 700; background: #f1fdfe; }
.grid .frozen > * { height: 25px; border-bottom: 4px solid #e4e4e4; }
.grid .frozen .cur { position: relative; overflow: visible; box-shadow: inset 0 0 0 2px #2a7de8; }
.cur i { position: absolute; right: -5px; bottom: -5px; width: 9px; height: 9px; border-radius: 50%; background: #1a62e0; }
.grid .part > * { height: 4px; line-height: 1px; }
.part .ul { border-top: 1px solid #2a63b8; }
.grid .r { text-align: right; }
.grid td a { color: #2a63b8; }
.grid .thick th { height: 22px; border-bottom-width: 2px; }
.scroll-up { position: absolute; right: 0; bottom: 14px; width: 6px; height: 4px; }

/* Windows taskbar */
.taskbar { position: absolute; left: 0; right: 0; bottom: 0; height: 45px; display: flex; align-items: center; justify-content: center; padding-right: 11px; background: #212121; border-top: 1px solid #4a4a4a; color: #fff; }
.apps { display: flex; align-items: center; padding-top: 2px; }
.app { position: relative; width: 44px; height: 40px; }
.app.start { width: 46px; }
.app.run::after { content: ""; position: absolute; bottom: 0; left: 19px; width: 6px; height: 3px; border-radius: 2px; background: #aaa; }
.app.focus { background: #303030; border-radius: 4px; }
.app.focus::after { left: 14px; width: 16px; background: #f5a05a; }
.count { position: absolute; right: 0; top: 1px; width: 16px; height: 16px; border-radius: 50%; background: #f2994a; color: #000; font: 12px/16px "Open Sans", sans-serif; }
.count.pink { background: #d0006f; color: #fff; font-size: 10px; }
.search { display: flex; align-items: center; width: 221px; height: 32px; margin-right: 2px; padding: 0 3px 0 12px; border-radius: 16px; background: #3a3a38; border: 1px solid #4d4d4d; color: #d0d0d0; }
.search input { flex: 1; margin-left: 6px; font-size: 13px; }
.search input::placeholder { color: #d0d0d0; opacity: 1; }
.food { width: 48px; height: 24px; }
.tray { position: absolute; right: 17px; top: 2px; height: 44px; display: flex; align-items: center; gap: 8px; }
.tray button { width: 24px; height: 30px; }
.lang { width: 36px; text-align: center; line-height: 19px; margin-right: 8px; }
.clock { width: 72px; text-align: right; line-height: 19px; }
.pre { width: 26px; height: 28px; margin-left: 9px; }
.pointer { position: absolute; left: 1217px; top: 974px; width: 12px; height: 19px; }

/* Video player overlay */
.player { position: absolute; left: -4px; right: -3px; bottom: 0; height: 147px; background: rgba(29, 29, 29, .7); color: #fff; }
.seek { display: flex; align-items: center; height: 33px; padding: 0 39px; gap: 23px; font-size: 11px; }
.seek input { flex: 1; height: 20px; margin: 0; appearance: none; }
.seek span { width: 38px; }
.seek input::-webkit-slider-runnable-track { height: 4px; border-radius: 2px; background: linear-gradient(90deg, #ff832f 34%, #b4b4b4 34%); }
.seek input::-webkit-slider-thumb { appearance: none; width: 20px; height: 20px; margin-top: -8px; border: 5px solid #454545; border-radius: 50%; background: #ff832f; }
.transport { display: grid; grid-template-columns: 1fr auto 1fr; align-items: center; height: 50px; margin-top: 16px; padding: 0 23px; }
.transport h2 { padding-left: 16px; font-size: 19px; line-height: 28px; font-weight: 600; }
.keys, .extras { display: flex; align-items: center; }
.keys button, .extras button { width: 44px; height: 44px; }
.keys .pause { width: 58px; }
.pause svg { width: 50px; height: 50px; }
.keys .skip { flex-direction: column; font: 500 12px/12px Roboto, sans-serif; }
.skip svg { width: 18px; height: 8px; }
.keys .dim { color: #a0a0a0; }
.extras { justify-content: flex-end; }
```
